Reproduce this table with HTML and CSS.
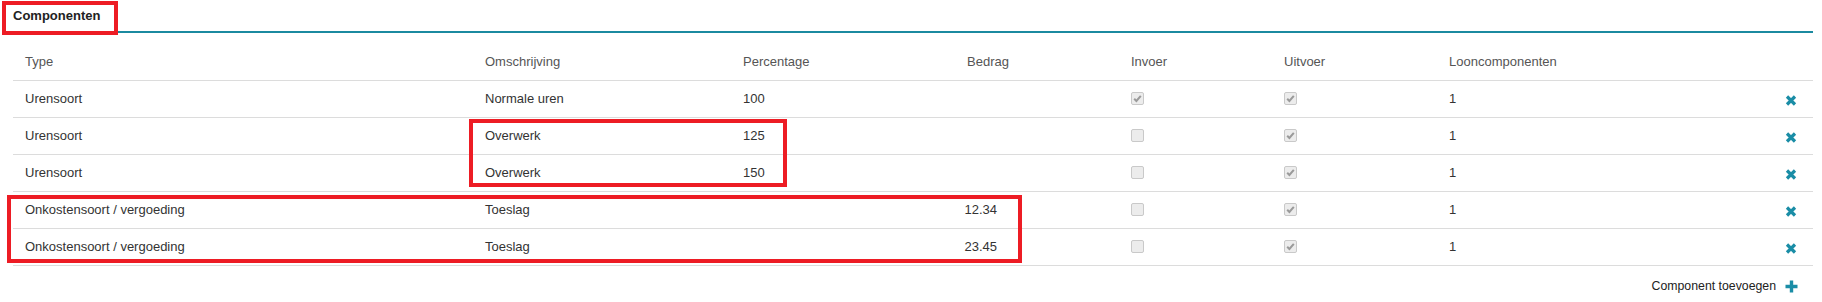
FILE: index.html
```html
<!DOCTYPE html>
<html lang="nl">
<head>
<meta charset="utf-8">
<title>Componenten</title>
<link rel="stylesheet" href="styles.css">
</head>
<body>
<div class="page">
  <section class="panel">
    <h2 class="panel-title"><span>Componenten</span></h2>
    <table class="grid">
      <colgroup>
        <col class="c-type"><col class="c-omschr"><col class="c-perc"><col class="c-bedrag"><col class="c-in"><col class="c-uit"><col class="c-loon"><col class="c-act">
      </colgroup>
      <thead>
        <tr><th>Type</th><th>Omschrijving</th><th>Percentage</th><th>Bedrag</th><th>Invoer</th><th>Uitvoer</th><th>Looncomponenten</th><th></th></tr>
      </thead>
      <tbody>
        <tr><td>Urensoort</td><td>Normale uren</td><td>100</td><td class="amount"></td><td><span class="cb checked"><svg viewBox="0 0 13 13" width="13" height="13"><path d="M3.2 6.8 L5.4 9 L9.8 3.8" fill="none" stroke="#9a9a9a" stroke-width="2"/></svg></span></td><td><span class="cb checked"><svg viewBox="0 0 13 13" width="13" height="13"><path d="M3.2 6.8 L5.4 9 L9.8 3.8" fill="none" stroke="#9a9a9a" stroke-width="2"/></svg></span></td><td>1</td><td class="act"><span class="del"><svg viewBox="0 0 12 11" width="12" height="11"><path d="M2 1.5 L10 9.5 M10 1.5 L2 9.5" stroke="#1a8da6" stroke-width="3.2"/></svg></span></td></tr>
        <tr><td>Urensoort</td><td>Overwerk</td><td>125</td><td class="amount"></td><td><span class="cb"></span></td><td><span class="cb checked"><svg viewBox="0 0 13 13" width="13" height="13"><path d="M3.2 6.8 L5.4 9 L9.8 3.8" fill="none" stroke="#9a9a9a" stroke-width="2"/></svg></span></td><td>1</td><td class="act"><span class="del"><svg viewBox="0 0 12 11" width="12" height="11"><path d="M2 1.5 L10 9.5 M10 1.5 L2 9.5" stroke="#1a8da6" stroke-width="3.2"/></svg></span></td></tr>
        <tr><td>Urensoort</td><td>Overwerk</td><td>150</td><td class="amount"></td><td><span class="cb"></span></td><td><span class="cb checked"><svg viewBox="0 0 13 13" width="13" height="13"><path d="M3.2 6.8 L5.4 9 L9.8 3.8" fill="none" stroke="#9a9a9a" stroke-width="2"/></svg></span></td><td>1</td><td class="act"><span class="del"><svg viewBox="0 0 12 11" width="12" height="11"><path d="M2 1.5 L10 9.5 M10 1.5 L2 9.5" stroke="#1a8da6" stroke-width="3.2"/></svg></span></td></tr>
        <tr><td>Onkostensoort / vergoeding</td><td>Toeslag</td><td></td><td class="amount">12.34</td><td><span class="cb"></span></td><td><span class="cb checked"><svg viewBox="0 0 13 13" width="13" height="13"><path d="M3.2 6.8 L5.4 9 L9.8 3.8" fill="none" stroke="#9a9a9a" stroke-width="2"/></svg></span></td><td>1</td><td class="act"><span class="del"><svg viewBox="0 0 12 11" width="12" height="11"><path d="M2 1.5 L10 9.5 M10 1.5 L2 9.5" stroke="#1a8da6" stroke-width="3.2"/></svg></span></td></tr>
        <tr><td>Onkostensoort / vergoeding</td><td>Toeslag</td><td></td><td class="amount">23.45</td><td><span class="cb"></span></td><td><span class="cb checked"><svg viewBox="0 0 13 13" width="13" height="13"><path d="M3.2 6.8 L5.4 9 L9.8 3.8" fill="none" stroke="#9a9a9a" stroke-width="2"/></svg></span></td><td>1</td><td class="act"><span class="del"><svg viewBox="0 0 12 11" width="12" height="11"><path d="M2 1.5 L10 9.5 M10 1.5 L2 9.5" stroke="#1a8da6" stroke-width="3.2"/></svg></span></td></tr>
      </tbody>
    </table>
    <div class="footer">
      <a class="add" href="#">Component toevoegen<svg viewBox="0 0 13 13" width="13" height="13"><path d="M6.5 0.5 V12.5 M0.5 6.5 H12.5" stroke="#1a8da6" stroke-width="3.4"/></svg></a>
    </div>
  </section>

  <div class="mark mark-title"></div>
  <div class="mark mark-overwerk"></div>
  <div class="mark mark-toeslag"></div>
</div>
</body>
</html>
```
FILE: styles.css
```css
* { box-sizing: border-box; }
html, body { margin: 0; padding: 0; background: #fff; }
body {
  font-family: "Liberation Sans", Arial, sans-serif;
  font-size: 13px;
  color: #333;
}
.page {
  position: relative;
  width: 1822px;
  height: 302px;
  padding: 0 9px 0 13px;
}
.panel { width: 1800px; }
.panel-title {
  margin: 0;
  padding-top: 8px;
  height: 33px;
  font-size: 13px;
  font-weight: bold;
  line-height: 15px;
  color: #222;
  border-bottom: 2px solid #1b8aa0;
}
.grid {
  margin-top: 10px;
  width: 1800px;
  border-collapse: collapse;
  table-layout: fixed;
}
.c-type { width: 460px; }
.c-omschr { width: 258px; }
.c-perc { width: 224px; }
.c-bedrag { width: 164px; }
.c-in { width: 153px; }
.c-uit { width: 165px; }
.c-loon { width: 300px; }
.c-act { width: 76px; }
.grid th, .grid td {
  height: 37px;
  padding: 0 12px;
  text-align: left;
  vertical-align: middle;
  line-height: 15px;
  border-bottom: 1px solid #dcdcdc;
  white-space: nowrap;
}
.grid th {
  font-weight: normal;
  color: #555;
}
.grid td.amount {
  text-align: right;
  padding-right: 122px;
  padding-left: 0;
}
.grid td.act {
  text-align: right;
  padding-right: 16px;
}
.cb {
  display: inline-block;
  width: 13px;
  height: 13px;
  vertical-align: middle;
  border: 1px solid #c9c9c9;
  border-radius: 2px;
  background: #ececec;
  position: relative;
  top: -1px;
}
.cb svg {
  display: block;
  margin: -1px 0 0 -1px;
}
.del {
  display: inline-block;
  vertical-align: middle;
  position: relative;
  top: 1px;
}
.del svg { display: block; }
.footer {
  display: flex;
  justify-content: flex-end;
  padding: 13px 15px 0 0;
}
.add {
  display: flex;
  align-items: center;
  gap: 9px;
  color: #222;
  font-size: 12.3px;
  text-decoration: none;
  line-height: 15px;
}
.add svg { display: block; }
.mark {
  position: absolute;
  border: 4px solid #ed1c24;
  pointer-events: none;
}
.mark-title { left: 2px; top: 1px; width: 116px; height: 34px; }
.mark-overwerk { left: 469px; top: 119px; width: 318px; height: 68px; }
.mark-toeslag { left: 7px; top: 195px; width: 1015px; height: 68px; }
```
